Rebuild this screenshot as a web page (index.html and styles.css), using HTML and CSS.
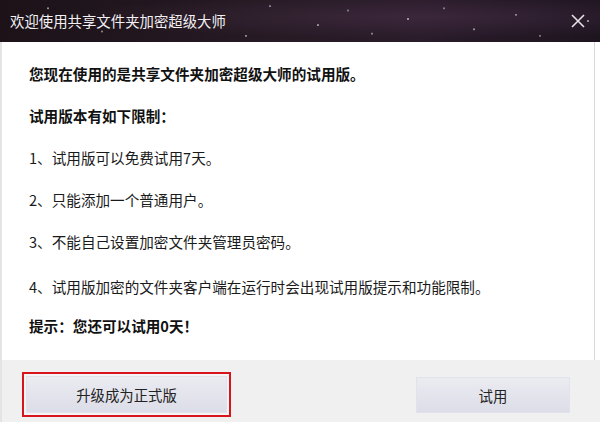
FILE: index.html
```html
<!DOCTYPE html>
<html lang="zh-CN">
<head>
<meta charset="utf-8">
<title>欢迎使用共享文件夹加密超级大师</title>
<link rel="stylesheet" href="styles.css">
</head>
<body>
<div class="dialog">
  <header class="titlebar">
    <span class="title">欢迎使用共享文件夹加密超级大师</span>
    <svg class="close" width="14" height="14" viewBox="0 0 14 14"><path d="M1 1 L13 13 M13 1 L1 13" stroke="#e6e3e6" stroke-width="1.6" fill="none"/></svg>
  </header>
  <main class="content">
    <p class="line bold">您现在使用的是共享文件夹加密超级大师的试用版。</p>
    <p class="line bold">试用版本有如下限制：</p>
    <p class="line">1、试用版可以免费试用7天。</p>
    <p class="line">2、只能添加一个普通用户。</p>
    <p class="line">3、不能自己设置加密文件夹管理员密码。</p>
    <p class="line l4">4、试用版加密的文件夹客户端在运行时会出现试用版提示和功能限制。</p>
    <p class="line bold l5">提示：您还可以试用0天！</p>
  </main>
  <footer class="footer">
    <div class="highlight"><button class="btn btn-upgrade">升级成为正式版</button></div>
    <button class="btn btn-try">试用</button>
  </footer>
</div>
</body>
</html>
```
FILE: styles.css
```css
html, body {
  margin: 0;
  padding: 0;
  background: #ffffff;
}
body {
  width: 600px;
  height: 422px;
  overflow: hidden;
  font-family: "Microsoft YaHei", "Noto Sans CJK SC", "Noto Sans", sans-serif;
}
.dialog {
  display: flex;
  flex-direction: column;
  height: 422px;
}
.titlebar {
  height: 42px;
  flex: none;
  display: flex;
  align-items: center;
  justify-content: space-between;
  padding: 0 15px 0 10px;
  box-sizing: border-box;
  background-color: #221620;
  background-image:
    radial-gradient(circle at 8% 20%, rgba(255,255,255,0.5) 0 0.8px, transparent 1.3px),
    radial-gradient(circle at 17% 75%, rgba(255,255,255,0.45) 0 0.8px, transparent 1.3px),
    radial-gradient(circle at 29% 35%, rgba(255,255,255,0.4) 0 0.8px, transparent 1.3px),
    radial-gradient(circle at 41% 85%, rgba(255,255,255,0.5) 0 0.8px, transparent 1.3px),
    radial-gradient(circle at 45% 15%, rgba(255,255,255,0.45) 0 0.8px, transparent 1.3px),
    radial-gradient(circle at 53% 60%, rgba(255,255,255,0.5) 0 0.8px, transparent 1.3px),
    radial-gradient(circle at 58% 25%, rgba(255,255,255,0.4) 0 0.8px, transparent 1.3px),
    radial-gradient(circle at 62% 80%, rgba(255,255,255,0.45) 0 0.8px, transparent 1.3px),
    radial-gradient(circle at 68% 45%, rgba(255,255,255,0.5) 0 0.8px, transparent 1.3px),
    radial-gradient(circle at 74% 20%, rgba(255,255,255,0.4) 0 0.8px, transparent 1.3px),
    radial-gradient(circle at 79% 70%, rgba(255,255,255,0.5) 0 0.8px, transparent 1.3px),
    radial-gradient(circle at 86% 35%, rgba(255,255,255,0.45) 0 0.8px, transparent 1.3px),
    radial-gradient(circle at 90% 85%, rgba(255,255,255,0.4) 0 0.8px, transparent 1.3px),
    radial-gradient(circle at 98% 50%, rgba(255,255,255,0.5) 0 0.8px, transparent 1.3px),
    radial-gradient(ellipse at 70% 40%, rgba(90,60,90,0.35), transparent 60%),
    linear-gradient(90deg, #1c1218 0%, #261a24 45%, #2a1c2a 70%, #1e1420 100%);
}
.title {
  color: #f2f0f2;
  font-size: 14.4px;
  line-height: 20px;
}
.close {
  display: block;
}
.content {
  flex: 1;
  background: #ffffff;
  border-left: 2px solid #e4e4e4;
  border-right: 1px solid #d9d9d9;
  margin-right: 5px;
  padding: 22px 0 0 27px;
  display: flex;
  flex-direction: column;
  gap: 22px;
}
.line {
  margin: 0;
  font-size: 14.6px;
  line-height: 20px;
  color: #1a1a1a;
  white-space: nowrap;
}
.bold {
  font-weight: bold;
  color: #111111;
}
.l4 {
  margin-top: 3px;
}
.l5 {
  margin-top: -3px;
}
.footer {
  flex: none;
  height: 62px;
  box-sizing: border-box;
  background: #f0f0f0;
  border-left: 2px solid #e4e4e4;
  display: flex;
  justify-content: space-between;
  align-items: flex-start;
  padding: 12px 30px 0 20px;
}
.highlight {
  border: 2px solid #d8141c;
  padding: 2px;
  background: #f4f4f6;
}
.btn {
  font-family: inherit;
  font-size: 14.4px;
  color: #222222;
  border: 1px solid #e2e2ea;
  background: linear-gradient(180deg, #ebebf1 0%, #dcdde8 100%);
  height: 37px;
  padding: 0;
  cursor: pointer;
}
.btn-upgrade {
  display: block;
  width: 201px;
}
.btn-try {
  margin-top: 5px;
  width: 154px;
  height: 36px;
}
```
